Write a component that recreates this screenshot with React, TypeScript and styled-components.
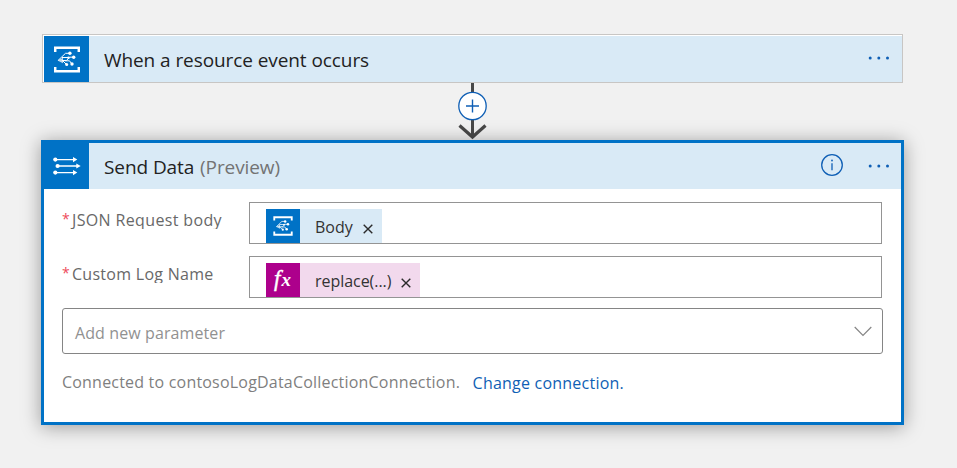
import React from "react";
import styled, { createGlobalStyle } from "styled-components";

const blue = "#0072c6";
const linkBlue = "#0f5fb5";

const GlobalStyle = createGlobalStyle`
  *, *::before, *::after { box-sizing: border-box; }
  body {
    margin: 0;
    background: #f1f1f1;
    font-family: "Open Sans", "Noto Sans", sans-serif;
    font-size: 16px;
  }
  svg { display: block; flex: none; }
`;

const Canvas = styled.main`
  display: flex;
  flex-direction: column;
  width: 957px;
  height: 468px;
  padding: 34px 53px 0 41px;
  overflow: hidden;
  background: #f1f1f1;
`;

const TriggerCard = styled.section`
  margin: 0 1px;
  padding: 1px 0 0 1px;
  height: 49px;
  border: 1px solid #c8c6c4;
  background: #fff;
`;

const ActionCard = styled.section`
  height: 285px;
  border: 3px solid ${blue};
  background: #fff;
  box-shadow: 0 2px 18px rgba(0, 0, 0, 0.36);
`;

const Header = styled.header<{ $end: number }>`
  display: flex;
  align-items: center;
  height: 46px;
  padding-right: ${(p) => p.$end}px;
  background: #d9eaf6;
`;

const IconTile = styled.span<{ $size: number; $color?: string; $height?: number }>`
  display: flex;
  flex: none;
  align-items: center;
  justify-content: center;
  width: ${(p) => p.$size}px;
  height: ${(p) => p.$height ?? p.$size}px;
  background: ${(p) => p.$color ?? blue};
`;

const Title = styled.h2<{ $drop: number }>`
  flex: 1;
  margin: 0;
  padding: ${(p) => p.$drop}px 0 0 15px;
  color: #222;
  font-size: 19px;
  font-weight: 400;
  line-height: 26px;
  letter-spacing: -0.08px;
  white-space: nowrap;
`;

const Preview = styled.span`
  margin-left: 1px;
  color: #737373;
  letter-spacing: -0.1px;
`;

const IconButton = styled.button`
  display: flex;
  padding: 0;
  border: 0;
  background: none;
  color: ${linkBlue};
`;

const HeaderActions = styled.div`
  display: flex;
  align-items: center;
  gap: 25px;
`;

const Connector = styled.div`
  display: flex;
  justify-content: center;
  height: 57px;
`;

const Body = styled.div`
  display: flex;
  flex-direction: column;
  padding: 13px 18px 0;
`;

const FieldRow = styled.div`
  display: flex;
  align-items: flex-start;
  height: 54px;
  padding-right: 1px;
`;

const Label = styled.label<{ $spacing: number }>`
  display: flex;
  width: 187px;
  height: 20px;
  margin-top: 7px;
  overflow: hidden;
  color: #686868;
  line-height: 22px;
  letter-spacing: ${(p) => p.$spacing}px;
  white-space: nowrap;
`;

const Required = styled.span`
  width: 10px;
  color: #ee4a5a;
  font-size: 14px;
  line-height: 20px;
  letter-spacing: 0;
`;

const TokenInput = styled.div`
  display: flex;
  flex: 1;
  height: 42px;
  padding: 6px 0 0 16px;
  border: 1px solid #949494;
`;

const Token = styled.span<{ $width: number; $color: string }>`
  display: flex;
  align-items: center;
  width: ${(p) => p.$width}px;
  height: 34px;
  background: ${(p) => p.$color};
`;

const TokenText = styled.span`
  flex: 1;
  padding: 2px 0 0 15px;
  color: #333;
  line-height: 22px;
  letter-spacing: -0.04px;
  white-space: nowrap;
`;

const RemoveButton = styled(IconButton)`
  margin: 5px 9px 0 0;
  color: #2b2b2b;
`;

const FxGlyph = styled.span`
  padding-bottom: 2px;
  color: #fff;
  font: italic 400 23px/30px "Liberation Serif", serif;
  letter-spacing: 1px;
  -webkit-text-stroke: 0.4px #fff;
`;

const FxSubscript = styled.span`
  font-size: 19px;
  font-weight: 700;
  -webkit-text-stroke: 0;
`;

const ParameterSelect = styled.div`
  display: flex;
  align-items: center;
  justify-content: space-between;
  width: 821px;
  height: 46px;
  margin-top: -2px;
  padding: 0 10px 0 12px;
  border: 1px solid #858585;
  border-radius: 3px;
  color: #919191;
`;

const Placeholder = styled.span`
  padding-top: 4px;
  line-height: 22px;
  letter-spacing: 0.1px;
`;

const ConnectionRow = styled.div`
  display: flex;
  align-items: flex-start;
  padding-top: 17px;
  color: #7f7f7f;
  line-height: 22px;
  letter-spacing: 0.2px;
  white-space: nowrap;
`;

const ChangeLink = styled.a`
  margin: 1px 0 0 12.5px;
  color: ${linkBlue};
  letter-spacing: 0.22px;
`;

function EventGridIcon({ width, height }: { width: number; height: number }) {
  return (
    <svg width={width} height={height} viewBox="0 0 26 27" fill="none" stroke="#fff">
      <path d="M1.2 6V1.7h23.6V6M1.2 21v4.3h23.6V21" strokeWidth="2.5" />
      <path
        d="M4 14.5 11.5 7.3H15.7M8 11.5h6.5M8 14.5h4.5l3-3.3h3.8M8.5 14.5l3.5 3.5M11 14.8h4.5l2.2 3"
        strokeWidth="1"
      />
      <path d="M3.5 14.5 9 11.8v5.4z" fill="#fff" fillOpacity=".75" stroke="none" />
      <g fill="#fff" stroke="none">
        <circle cx="15.9" cy="7.3" r="1.7" />
        <circle cx="19.7" cy="11.2" r="1.7" />
        <circle cx="14.5" cy="11.7" r="1.2" />
        <circle cx="18" cy="18" r="1.7" />
        <circle cx="12.7" cy="18.4" r="1.5" />
      </g>
    </svg>
  );
}

function SendDataIcon() {
  return (
    <svg width="29" height="20" viewBox="0 0 29 20" stroke="#fff" fill="#fff">
      <path d="M3 3.6h19M5 10h20M3 16.6h19" strokeWidth="1.3" />
      <g stroke="none">
        <circle cx="3.3" cy="3.6" r="2.1" />
        <circle cx="5.6" cy="10" r="2.1" />
        <circle cx="3.3" cy="16.6" r="2.1" />
        <path d="M21 1 25.3 3.6 21 6.2zM24.3 7.4l4.4 2.6-4.4 2.6zM21 14l4.3 2.6-4.3 2.6z" />
      </g>
    </svg>
  );
}

function MoreIcon() {
  return (
    <IconButton aria-label="More">
      <svg width="22" height="4" viewBox="0 0 22 4" fill="currentColor">
        <circle cx="2.2" cy="2" r="1.5" />
        <circle cx="10.8" cy="2" r="1.5" />
        <circle cx="19.5" cy="2" r="1.5" />
      </svg>
    </IconButton>
  );
}

function RemoveToken() {
  return (
    <RemoveButton aria-label="Remove">
      <svg width="10" height="10" viewBox="0 0 10 10" stroke="currentColor" strokeWidth="1.4">
        <path d="m.7.7 8.6 8.6M9.3.7.7 9.3" />
      </svg>
    </RemoveButton>
  );
}

const OffsetUp = styled.div`
  padding-bottom: 3px;
`;

export default function App() {
  return (
    <>
      <GlobalStyle />
      <Canvas>
        <TriggerCard>
          <Header $end={12}>
            <IconTile $size={45} $height={46}>
              <EventGridIcon width={26} height={27} />
            </IconTile>
            <Title $drop={2}>When a resource event occurs</Title>
            <OffsetUp>
              <MoreIcon />
            </OffsetUp>
          </Header>
        </TriggerCard>
        <Connector>
          <svg width="31" height="57" viewBox="0 0 31 57" fill="none">
            <path d="M15.5 0v54" stroke="#484848" strokeWidth="3" />
            <path d="M2.5 42.5 15.5 54l13-11.5" stroke="#484848" strokeWidth="3.2" />
            <circle cx="15.5" cy="23" r="13.7" fill="#fff" stroke={linkBlue} strokeWidth="1.3" />
            <path d="M9 23h13M15.5 16.5v13" stroke={linkBlue} strokeWidth="1.4" />
          </svg>
        </Connector>
        <ActionCard>
          <Header $end={11}>
            <IconTile $size={45} $height={46}>
              <SendDataIcon />
            </IconTile>
            <Title $drop={1}>
              Send Data <Preview>(Preview)</Preview>
            </Title>
            <HeaderActions>
              <IconButton aria-label="Information">
                <svg width="22" height="24" viewBox="0 0 22 24" fill="none" stroke="currentColor">
                  <circle cx="11" cy="11" r="10.3" strokeWidth="1.3" />
                  <path d="M11 9.3v7" strokeWidth="1.3" />
                  <circle cx="11" cy="6.5" r=".9" fill="currentColor" stroke="none" />
                </svg>
              </IconButton>
              <MoreIcon />
            </HeaderActions>
          </Header>
          <Body>
            <FieldRow>
              <Label $spacing={0.36}>
                <Required>*</Required>JSON Request body
              </Label>
              <TokenInput>
                <Token $width={116} $color="#d9eaf6">
                  <IconTile $size={34}>
                    <EventGridIcon width={20} height={20} />
                  </IconTile>
                  <TokenText>Body</TokenText>
                  <RemoveToken />
                </Token>
              </TokenInput>
            </FieldRow>
            <FieldRow>
              <Label $spacing={0.28}>
                <Required>*</Required>Custom Log Name
              </Label>
              <TokenInput>
                <Token $width={154} $color="#f2d9ed">
                  <IconTile $size={34} $color="#ad008c">
                    <FxGlyph>
                      f<FxSubscript>x</FxSubscript>
                    </FxGlyph>
                  </IconTile>
                  <TokenText>replace(...)</TokenText>
                  <RemoveToken />
                </Token>
              </TokenInput>
            </FieldRow>
            <ParameterSelect>
              <Placeholder>Add new parameter</Placeholder>
              <svg width="18" height="11" viewBox="0 0 18 11" fill="none" stroke="#858585" strokeWidth="1.2">
                <path d="m.7 1 8.3 8.3L17.3 1" />
              </svg>
            </ParameterSelect>
            <ConnectionRow>
              <span>Connected to contosoLogDataCollectionConnection.</span>
              <ChangeLink>Change connection.</ChangeLink>
            </ConnectionRow>
          </Body>
        </ActionCard>
      </Canvas>
    </>
  );
}
